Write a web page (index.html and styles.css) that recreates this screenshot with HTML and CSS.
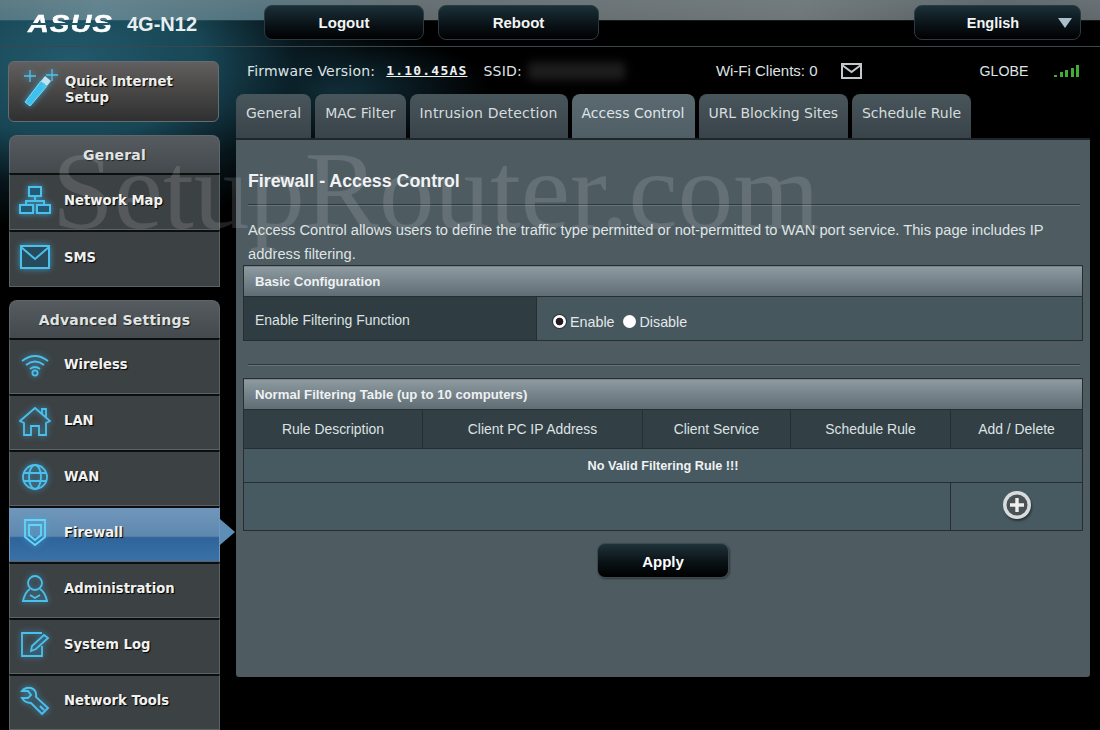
FILE: index.html
```html
<!DOCTYPE html>
<html lang="en">
<head>
    <meta charset="UTF-8">
    <title>ASUS 4G-N12 - Firewall - Access Control</title>
    <link rel="stylesheet" href="styles.css">
</head>
<body>
    <div class="page">
        <div class="watermark">SetupRouter.com</div>

        <div class="top-bar">
            <div class="brand">
                <span class="logo">ASUS</span>
                <span class="model">4G-N12</span>
            </div>
            <button class="top-btn logout">Logout</button>
            <button class="top-btn reboot">Reboot</button>
            <div class="top-btn lang">
                <span>English</span>
                <i class="lang-arrow"></i>
            </div>
        </div>

        <div class="main">
            <div class="sidebar">
                <div class="quick-setup">
                    <svg class="icon wand" width="40" height="44" viewBox="0 0 40 44">
                        <path d="M5 38 L21 17 L27 22 L10 42 Z" fill="#3cc0ee" stroke="#7fdcfa" stroke-width="1"/>
                        <path d="M21 17 L25 12 L31 17 L27 22 Z" fill="#bfe4ef"/>
                        <path d="M10 6 V18 M4 12 H16 M32 5 V17 M26 11 H38 M24 19 V25 M21 22 H27" stroke="#4cc4ee" stroke-width="1.3" fill="none"/>
                    </svg>
                    <span class="quick-label">Quick Internet<br>Setup</span>
                </div>

                <div class="menu menu-general">
                    <div class="menu-head">General</div>
                    <div class="menu-item">
                        <span class="icon-box">
                            <svg class="icon" width="34" height="30" viewBox="0 0 34 30" fill="none" stroke="#4cc0ec" stroke-width="2">
                                <rect x="11" y="2" width="12" height="9" fill="#235b75"/>
                                <path d="M17 11 V16 M8 21 V16 H26 V21"/>
                                <rect x="2" y="20" width="13" height="8" fill="#235b75"/>
                                <rect x="19" y="20" width="13" height="8" fill="#235b75"/>
                            </svg>
                        </span>
                        Network Map
                    </div>
                    <div class="menu-item">
                        <span class="icon-box">
                            <svg class="icon" width="32" height="26" viewBox="0 0 32 26" fill="none" stroke="#4cc0ec" stroke-width="2">
                                <rect x="2" y="2" width="28" height="22" fill="#274a5c"/>
                                <path d="M2 3 L16 15 L30 3"/>
                            </svg>
                        </span>
                        SMS
                    </div>
                </div>

                <div class="menu">
                    <div class="menu-head">Advanced Settings</div>
                    <div class="menu-item">
                        <span class="icon-box">
                            <svg class="icon" width="30" height="26" viewBox="0 0 30 26" fill="none" stroke="#4cc0ec" stroke-width="1.8">
                                <path d="M2 9 Q15 -1 28 9"/>
                                <path d="M6 13 Q15 6 24 13"/>
                                <path d="M10 17 Q15 13 20 17"/>
                                <circle cx="15" cy="21" r="2.6"/>
                            </svg>
                        </span>
                        Wireless
                    </div>
                    <div class="menu-item">
                        <span class="icon-box">
                            <svg class="icon" width="32" height="30" viewBox="0 0 32 30" fill="none" stroke="#4cc0ec" stroke-width="1.8">
                                <path d="M1 15 L16 2 L31 15 L27 17 V29 H20 V20 H12 V29 H5 V17 Z"/>
                                <path d="M23 8 V3 H27 V12"/>
                            </svg>
                        </span>
                        LAN
                    </div>
                    <div class="menu-item">
                        <span class="icon-box">
                            <svg class="icon" width="28" height="28" viewBox="0 0 28 28" fill="none" stroke="#4cc0ec" stroke-width="1.8">
                                <circle cx="14" cy="14" r="12"/>
                                <ellipse cx="14" cy="14" rx="6" ry="12"/>
                                <path d="M3 10 H25 M3 18 H25"/>
                            </svg>
                        </span>
                        WAN
                    </div>
                    <div class="menu-item active">
                        <span class="icon-box">
                            <svg class="icon" width="24" height="29" viewBox="0 0 24 29" fill="none" stroke="#66d4f6" stroke-width="1.8">
                                <path d="M2 2 H22 V19 L12 27 L2 19 Z"/>
                                <path d="M6 7 H18 V17 L12 22 L6 17 Z"/>
                            </svg>
                        </span>
                        Firewall
                        <i class="active-arrow"></i>
                    </div>
                    <div class="menu-item">
                        <span class="icon-box">
                            <svg class="icon" width="26" height="28" viewBox="0 0 26 28" fill="none" stroke="#4cc0ec" stroke-width="1.8">
                                <ellipse cx="13" cy="8" rx="7" ry="7"/>
                                <path d="M8 14 Q3 17 1 26 H25 Q23 17 18 14"/>
                                <path d="M8 20 L13 23 L18 20"/>
                            </svg>
                        </span>
                        Administration
                    </div>
                    <div class="menu-item">
                        <span class="icon-box">
                            <svg class="icon" width="30" height="27" viewBox="0 0 30 27" fill="none" stroke="#4cc0ec" stroke-width="1.8">
                                <path d="M22 2 H2 V25 H22 V15"/>
                                <path d="M11 20 L12 15 L24 4 L28 7 L16 18 Z"/>
                            </svg>
                        </span>
                        System Log
                    </div>
                    <div class="menu-item">
                        <span class="icon-box">
                            <svg class="icon" width="30" height="30" viewBox="0 0 30 30" fill="none" stroke="#4cc0ec" stroke-width="1.9">
                                <path d="M2 5 Q5 1 11 2 Q17 4 16 11 L28 22 L22 28 L11 17 Q5 17 2 12 L8 12 L11 9 L8 5 Z"/>
                                <path d="M20 20 L24 24"/>
                            </svg>
                        </span>
                        Network Tools
                    </div>
                </div>
            </div>

            <div class="content">
                <div class="info-row">
                    <span class="fw-label">Firmware Version:</span>
                    <a class="fw-value">1.10.45AS</a>
                    <span class="fw-label ssid">SSID:</span>
                    <span class="ssid-blur"></span>
                    <span class="clients">Wi-Fi Clients: 0</span>
                    <svg class="mail" width="21" height="16" viewBox="0 0 21 16" fill="none" stroke="#c4c8ca" stroke-width="2">
                        <rect x="1" y="1" width="19" height="14"/>
                        <path d="M1 2 L10.5 9 L20 2"/>
                    </svg>
                    <span class="carrier">GLOBE</span>
                    <div class="signal">
                        <i class="bar-1"></i><i class="bar-2"></i><i class="bar-3"></i><i class="bar-4"></i><i class="bar-5"></i>
                    </div>
                </div>

                <div class="tabs">
                    <div class="tab">General</div>
                    <div class="tab">MAC Filter</div>
                    <div class="tab tab-wide">Intrusion Detection</div>
                    <div class="tab selected">Access Control</div>
                    <div class="tab tab-narrow">URL Blocking Sites</div>
                    <div class="tab">Schedule Rule</div>
                </div>

                <div class="panel">
                    <h1 class="panel-title">Firewall - Access Control</h1>
                    <div class="rule title-rule"></div>
                    <p class="panel-desc">Access Control allows users to define the traffic type permitted or not-permitted to WAN port service. This page includes IP address filtering.</p>

                    <table class="form-table">
                        <colgroup><col class="col-label"><col></colgroup>
                        <tr><th class="section-head" colspan="2">Basic Configuration</th></tr>
                        <tr class="enable-row">
                            <td class="label-cell">Enable Filtering Function</td>
                            <td class="value-cell">
                                <span class="radio checked"></span><span class="radio-text">Enable</span>
                                <span class="radio"></span><span class="radio-text">Disable</span>
                            </td>
                        </tr>
                    </table>

                    <div class="rule table-rule"></div>

                    <table class="form-table rules-table">
                        <colgroup>
                            <col class="col-desc"><col class="col-ip"><col class="col-service"><col class="col-schedule"><col>
                        </colgroup>
                        <tr><th class="section-head" colspan="5">Normal Filtering Table (up to 10 computers)</th></tr>
                        <tr class="col-heads">
                            <td>Rule Description</td>
                            <td>Client PC IP Address</td>
                            <td>Client Service</td>
                            <td>Schedule Rule</td>
                            <td>Add / Delete</td>
                        </tr>
                        <tr class="empty-row"><td colspan="5">No Valid Filtering Rule !!!</td></tr>
                        <tr class="add-row">
                            <td colspan="4"></td>
                            <td>
                                <svg class="add-btn" width="30" height="30" viewBox="0 0 30 30">
                                    <circle cx="15" cy="15" r="14" fill="#d8dcdd"/>
                                    <circle cx="15" cy="15" r="10.5" fill="#4a5256"/>
                                    <path d="M15 8 V22 M8 15 H22" stroke="#eef0f0" stroke-width="3.4"/>
                                </svg>
                            </td>
                        </tr>
                    </table>

                    <div class="apply-row">
                        <button class="apply-btn">Apply</button>
                    </div>
                </div>
            </div>
        </div>
    </div>
</body>
</html>
```

FILE: styles.css
```css
* {
    box-sizing: border-box;
}

html, body {
    margin: 0;
    padding: 0;
    height: 100%;
    overflow: hidden;
    background-color: #000;
}

body {
    font-family: "Liberation Sans", Arial, sans-serif;
    font-size: 14px;
    color: #e6eaeb;
}

.page {
    position: relative;
    width: 1100px;
    height: 730px;
    overflow: hidden;
    background:
        radial-gradient(ellipse 300px 170px at 70px 60px, #22596b 0%, #184655 45%, rgba(10, 30, 38, 0.7) 75%, rgba(0, 0, 0, 0) 100%),
        radial-gradient(ellipse 160px 60px at 330px 90px, #12323e 0%, rgba(0, 0, 0, 0) 100%),
        #000;
}

.watermark {
    position: absolute;
    left: 52px;
    top: 132px;
    font-family: "Liberation Serif", "Times New Roman", serif;
    font-size: 111px;
    line-height: 118px;
    color: rgba(255, 255, 255, 0.13);
    white-space: nowrap;
    pointer-events: none;
    z-index: 5;
}

/* top bar */
.top-bar {
    display: flex;
    align-items: flex-start;
    height: 47px;
    padding-top: 5px;
    border-bottom: 1px solid #3c474c;
    background:
        linear-gradient(to bottom, rgba(120, 135, 140, 0.55) 0, rgba(120, 135, 140, 0.35) 20px, rgba(0, 0, 0, 0) 21px),
        linear-gradient(to right, #3e6d7c 0, #4e8192 100px, #3a6675 260px, #55595b 420px, #6b6e70 800px, #45484a 1000px, #55585a 1100px);
    background-size: 100% 100%, 100% 20px;
    background-repeat: no-repeat;
}

.brand {
    display: flex;
    align-items: center;
    width: 264px;
    height: 38px;
    padding-left: 28px;
}

.logo {
    position: relative;
    width: 81px;
    font-weight: bold;
    font-style: italic;
    font-size: 24px;
    line-height: 26px;
    letter-spacing: 1px;
    transform: scaleX(1.2);
    transform-origin: left center;
    -webkit-text-stroke: 0.5px #fff;
    color: #fff;
}

/* the slit through the logo */
.logo::after {
    content: "";
    position: absolute;
    left: 0;
    top: 12px;
    width: 68px;
    height: 2px;
    background-color: #1f5668;
}

.model {
    margin-left: 18px;
    font-weight: bold;
    font-size: 20px;
    color: #e8eef0;
}

.top-btn {
    display: flex;
    align-items: center;
    justify-content: center;
    height: 35px;
    padding-bottom: 1px;
    border: 1px solid #2a3a42;
    border-radius: 8px;
    background: linear-gradient(to bottom, #1c3039 0%, #0c161b 50%, #000 100%);
    color: #f2f4f5;
    font-family: "Liberation Sans", Arial, sans-serif;
    font-weight: bold;
    font-size: 15px;
}

.logout {
    width: 160px;
}

.reboot {
    width: 161px;
    margin-left: 14px;
}

.lang {
    position: relative;
    width: 167px;
    margin-left: 315px;
    padding-right: 9px;
    padding-bottom: 0;
    font-size: 14.5px;
}

.lang-arrow {
    position: absolute;
    right: 8px;
    top: 12px;
    width: 0;
    height: 0;
    border-left: 7px solid transparent;
    border-right: 7px solid transparent;
    border-top: 10px solid #a9c0cc;
}

/* layout */
.main {
    display: flex;
}

.sidebar {
    width: 236px;
    flex-shrink: 0;
    padding: 14px 0 0 8px;
}

.content {
    width: 854px;
}

/* sidebar */
.quick-setup {
    display: flex;
    align-items: center;
    width: 211px;
    height: 61px;
    padding-left: 11px;
    margin-bottom: 13px;
    border: 1px solid #666c6f;
    border-radius: 6px;
    background: linear-gradient(to bottom, #615f5f 0%, #4a4948 45%, #2f3031 100%);
    font-family: "DejaVu Sans", Verdana, sans-serif;
    font-weight: bold;
    font-size: 13.3px;
    line-height: 16px;
    text-shadow: 1px 1px 1px #000;
    color: #eceeee;
}

.quick-label {
    padding-bottom: 4px;
}

.wand {
    margin-right: 5px;
    margin-top: -12px;
}

.menu {
    width: 211px;
    margin: 0 0 13px 1px;
    border-radius: 8px 8px 0 0;
}

.menu-head {
    height: 38px;
    border: 1px solid #5f676b;
    border-bottom: none;
    border-radius: 8px 8px 0 0;
    background: linear-gradient(to bottom, #555b5e, #43494c);
    text-align: center;
    line-height: 38px;
    font-family: "DejaVu Sans", Verdana, sans-serif;
    font-weight: bold;
    font-size: 14px;
    letter-spacing: 0.2px;
    color: #dfe3e4;
    text-shadow: 1px 1px 1px #222;
}

.menu-item {
    position: relative;
    display: flex;
    align-items: center;
    height: 56px;
    padding-bottom: 4px;
    border-top: 2px solid #0c0e0f;
    border-left: 1px solid #5b6265;
    border-right: 1px solid #5b6265;
    border-bottom: 1px solid #5b6265;
    background-color: #3c4143;
    font-family: "DejaVu Sans", Verdana, sans-serif;
    font-weight: bold;
    font-size: 13.2px;
    color: #f0f2f2;
    text-shadow: 1px 1px 1px #000;
}

.menu-general .menu-item {
    height: 57px;
}

.icon-box {
    display: flex;
    justify-content: center;
    align-items: center;
    width: 54px;
    padding-right: 4px;
}

.icon {
    filter: drop-shadow(0 0 3px rgba(60, 180, 235, 0.75));
}

.menu-item.active {
    border-left-color: #6f98bb;
    border-right-color: #6f98bb;
    background: linear-gradient(to bottom, #7097bb 0%, #5f88af 53%, #2e6499 56%, #3a72a8 100%);
}

.active-arrow {
    position: absolute;
    right: -16px;
    top: 11px;
    width: 0;
    height: 0;
    border-top: 13px solid transparent;
    border-bottom: 13px solid transparent;
    border-left: 15px solid #5e8eb6;
}

/* info row above the tabs */
.info-row {
    display: flex;
    align-items: center;
    height: 47px;
    padding-left: 11px;
    font-family: "DejaVu Sans", Verdana, sans-serif;
    font-size: 14px;
    letter-spacing: 0.2px;
    color: #dfe3e4;
}

.fw-value {
    margin-left: 11px;
    font-family: "DejaVu Sans Mono", "Liberation Mono", monospace;
    font-size: 13px;
    font-weight: bold;
    letter-spacing: 1.2px;
    text-decoration: underline;
    color: #eef1f2;
}

.ssid {
    margin-left: 16px;
}

.ssid-blur {
    width: 97px;
    height: 18px;
    margin-left: 6px;
    background: #1d1d1d;
    border-radius: 4px;
    filter: blur(4px);
}

.clients {
    margin-left: 91px;
    font-family: "Liberation Sans", Arial, sans-serif;
    font-size: 15px;
    letter-spacing: 0;
}

.mail {
    margin-left: 23px;
}

.carrier {
    margin-left: 118px;
    font-family: "Liberation Sans", Arial, sans-serif;
    font-size: 14.2px;
    letter-spacing: 0;
}

.signal {
    display: flex;
    align-items: flex-end;
    gap: 2.5px;
    height: 12px;
    margin-left: 26px;
}

.signal i {
    width: 3px;
    background-color: #3fae36;
}

.bar-1 { height: 2px; }
.bar-2 { height: 5px; }
.bar-3 { height: 7px; }
.bar-4 { height: 9px; }
.bar-5 { height: 12px; }

/* tabs */
.tabs {
    display: flex;
    gap: 4px;
    height: 44px;
}

.tab {
    padding: 0 10px;
    border-radius: 8px 8px 0 0;
    background: linear-gradient(to bottom, #48555b, #39444a);
    font-family: "DejaVu Sans", Verdana, sans-serif;
    font-size: 14px;
    line-height: 38px;
    color: #d6dcde;
}

.tab-wide {
    letter-spacing: 0.2px;
}

.tab-narrow {
    letter-spacing: -0.05px;
}

.tab.selected {
    background: linear-gradient(to bottom, #5b6a71, #505e65);
    color: #dfe5e7;
}

/* main panel */
.panel {
    position: relative;
    height: 539px;
    padding: 0 7px;
    border-top: 2px solid #1e2629;
    border-radius: 0 0 3px 3px;
    background-color: #4e5b61;
    color: #e4e8e9;
}

.panel-title {
    margin: 0;
    padding: 31px 0 0 5px;
    font-size: 17.8px;
    line-height: 20px;
    font-weight: bold;
    color: #f0f2f3;
}

.rule {
    height: 1px;
    margin-left: 5px;
    margin-right: 3px;
    background-color: #2f383c;
    box-shadow: 0 1px 0 #66737a;
}

.title-rule {
    margin-top: 13px;
}

.panel-desc {
    margin: 13px 0 -1px;
    padding: 0 30px 0 5px;
    font-size: 14.7px;
    line-height: 24px;
    color: #dfe4e5;
}

.form-table {
    width: 840px;
    border-collapse: collapse;
    table-layout: fixed;
}

.form-table td,
.form-table th {
    padding: 0;
    border: 1px solid #262e32;
    font-size: 13.9px;
}

.form-table .section-head {
    height: 31px;
    padding-left: 11px;
    background: linear-gradient(to bottom, #8e9aa0, #5f6c73);
    text-align: left;
    font-size: 13.2px;
    font-weight: bold;
    color: #eef1f2;
}

.col-label {
    width: 293px;
}

.enable-row {
    height: 44px;
}

.form-table .label-cell {
    padding-left: 11px;
    padding-top: 2px;
    background-color: #2f3c42;
    font-size: 14px;
    color: #dde2e3;
}

.form-table .value-cell {
    padding-left: 16px;
    padding-top: 6px;
    background-color: #46575e;
    border-left: none;
    font-size: 14.3px;
    white-space: nowrap;
}

.radio {
    display: inline-block;
    width: 13px;
    height: 13px;
    margin-right: 4px;
    border-radius: 50%;
    background-color: #fff;
    vertical-align: -1px;
}

.radio.checked {
    background: radial-gradient(circle, #231c20 0, #231c20 3.5px, #fff 4.2px);
    box-shadow: 0 0 0 1px #2a3237;
}

.radio-text {
    margin-right: 4px;
}

.table-rule {
    margin-top: 23px;
    margin-bottom: 13px;
}

.col-desc {
    width: 179px;
}

.col-ip {
    width: 220px;
}

.col-service {
    width: 148px;
}

.col-schedule {
    width: 160px;
}

.col-heads {
    height: 39px;
}

.col-heads td {
    background-color: #323f45;
    text-align: center;
    color: #dde2e3;
}

.empty-row {
    height: 34px;
}

.form-table .empty-row td {
    background-color: #475a62;
    text-align: center;
    font-size: 12.7px;
    font-weight: bold;
    color: #f0f2f3;
}

.add-row {
    height: 48px;
}

.form-table .add-row td {
    padding-bottom: 4px;
    background-color: #475a62;
    text-align: center;
}

.add-btn {
    display: block;
    margin: 0 auto;
    filter: drop-shadow(1px 2px 1px rgba(0, 0, 0, 0.45));
}

.apply-row {
    display: flex;
    justify-content: center;
    margin-top: 12px;
}

.apply-btn {
    width: 132px;
    height: 35px;
    padding-top: 3px;
    border: 1px solid #3c4a50;
    border-radius: 8px;
    background: linear-gradient(to bottom, #1f323a 0%, #0a1216 55%, #000 100%);
    box-shadow: 1px 1px 2px rgba(0, 0, 0, 0.4);
    color: #fff;
    font-family: "Liberation Sans", Arial, sans-serif;
    font-weight: bold;
    font-size: 15px;
}
```
